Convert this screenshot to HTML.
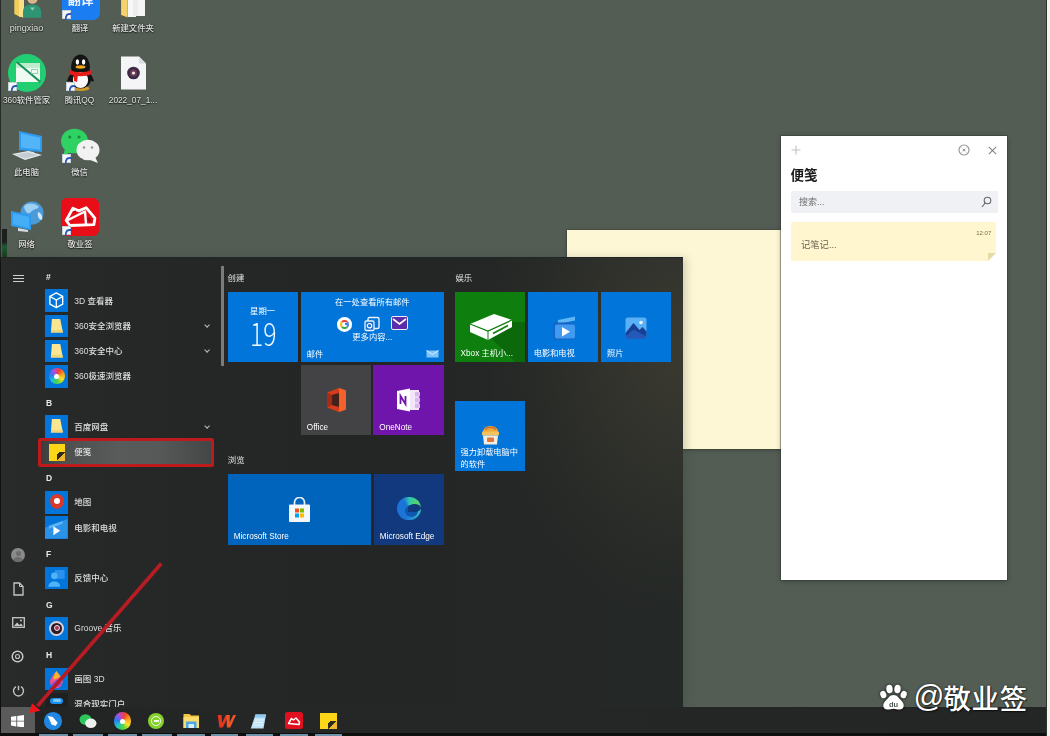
<!DOCTYPE html>
<html lang="zh-CN">
<head>
<meta charset="utf-8">
<title>便笺</title>
<style>
*{margin:0;padding:0;box-sizing:border-box}
html,body{width:1050px;height:736px;overflow:hidden}
body{position:relative;background:#535d54;font-family:"Liberation Sans","Noto Sans CJK SC",sans-serif;color:#fff}
.abs{position:absolute}
.dl{position:absolute;width:60px;text-align:center;font-size:8.3px;line-height:10px;color:#e2e4e2;font-weight:500;text-shadow:0 0 2px rgba(0,0,0,.8),0 1px 1px rgba(0,0,0,.6);white-space:nowrap;filter:blur(.35px)}
.sc{position:absolute;width:9px;height:9px;background:#f4f6f8;border:.5px solid #c8d0d8}
.sc:after{content:"";position:absolute;left:2px;top:1.5px;width:3.5px;height:5px;border-left:2px solid #2a56b8;border-top:2px solid #2a56b8;border-radius:4px 0 0 0;transform:skewX(-12deg)}
#start{position:absolute;left:1px;top:258px;width:681.500px;height:449px;background:linear-gradient(90deg,#292b2a 0,#272928 10%,#252726 30%,#242625 55%,#242826 100%);box-shadow:3px 0 8px rgba(30,60,40,.22);overflow:hidden}
.li{position:absolute;left:44.3px;width:22.6px;height:22.6px;background:#0175da;overflow:hidden}
.lt{position:absolute;left:73.300px;font-size:8.500px;line-height:12px;color:#dedede;font-weight:500;white-space:nowrap;filter:blur(.4px)}
.lh{position:absolute;left:45px;font-size:8.5px;line-height:12px;color:#e8e8e8;font-weight:bold;filter:blur(.3px)}
.chev{position:absolute;left:203.5px;width:4.2px;height:4.2px;border-right:1.2px solid #bdbdbd;border-bottom:1.2px solid #bdbdbd;transform:rotate(45deg)}
.tile{position:absolute;background:#0175da;overflow:hidden}
.tt{position:absolute;left:6px;bottom:2.300px;font-size:8.2px;line-height:11px;color:#fff;white-space:nowrap;filter:blur(.3px)}
.gh{position:absolute;font-size:8.4px;line-height:11px;color:#e4e4e4;filter:blur(.3px)}
</style>
</head>
<body>
<!--DESKTOP-->
<div class="abs" style="left:0;top:0;width:1.300px;height:736px;background:linear-gradient(180deg,#262b27 0,#262b27 34%,#0e0f0f 36%,#0e0f0f 100%);z-index:5"></div>
<div class="abs" style="left:1046px;top:0;width:1.2px;height:736px;background:#2f3431"></div>
<div class="abs" style="left:1047.2px;top:0;width:3px;height:736px;background:#f3f4ee"></div>
<div class="abs" style="left:1.500px;top:229px;width:5px;height:28.500px;background:linear-gradient(180deg,#1a211c 0,#1a211c 45%,#1f5a34 60%,#163a22 100%);filter:blur(.5px)"></div>

<!-- row 1 -->
<svg class="abs" style="left:12px;top:-10px" width="34" height="30" viewBox="0 0 34 30">
  <path d="M2.300 0h9.500v27.500l-4.500-1-5-2.500z" fill="#f2cc58"/><path d="M7 2h5v25.500l-5-1z" fill="#f9e08a"/>
  <circle cx="20.500" cy="8.500" r="5.200" fill="#d9b48c"/>
  <path d="M11 27.800v-6c0-5.500 4-7.300 9.500-7.300s8.700 3 8.700 8.300v5z" fill="#2f9474"/>
  <path d="M18 17.500l2.500 3 2.500-3z" fill="#8fd0b4"/>
</svg>
<div class="dl" style="left:-3.5px;top:23px;font-size:9px">pingxiao</div>
<div class="abs" style="left:61.7px;top:-18px;width:38.5px;height:38px;border-radius:7px;background:#1b7df2;overflow:hidden">
  <div class="abs" style="left:6px;top:11px;font-size:13px;line-height:13px;font-weight:bold;color:#eaf3ff;filter:blur(.5px)">翻译</div>
</div>
<div class="sc" style="left:62px;top:10px"></div>
<div class="dl" style="left:50px;top:23px">翻译</div>
<svg class="abs" style="left:119px;top:-10px" width="30" height="30" viewBox="0 0 30 30">
  <path d="M2 2h7l2 2v22l-9-1z" fill="#e4b84a"/><path d="M9 3h8v24H9z" fill="#f7f7f7"/><path d="M14 3h7v23h-7z" fill="#ececee"/><path d="M19 4h7v22h-7z" fill="#f5f5f6"/><path d="M2.500 6l6 3v18.500l-6-2.500z" fill="#f4d36a"/>
  <path d="M8.500 9v18" stroke="#c9a544" stroke-width=".6"/>
</svg>
<div class="dl" style="left:103px;top:23px">新建文件夹</div>

<!-- row 2 -->
<div class="abs" style="left:7.7px;top:54px;width:38.6px;height:38px;border-radius:50%;background:#21cf72;overflow:hidden">
  <div class="abs" style="left:8px;top:9px;width:24px;height:19px;background:#eefaf2"></div>
  <div class="abs" style="left:8px;top:9px;width:24px;height:5px;background:#bfeccf"></div>
  <div class="abs" style="left:5px;top:17px;width:31px;height:2px;background:#1a8f5a;transform:rotate(40deg)"></div>
  <div class="abs" style="left:23px;top:15px;width:7px;height:5px;border:1px solid #8fd9ae"></div>
</div>
<div class="sc" style="left:8px;top:82px"></div>
<div class="dl" style="left:-3.5px;top:95px">360软件管家</div>
<svg class="abs" style="left:64px;top:53px" width="33" height="39" viewBox="0 0 33 39">
  <ellipse cx="16.5" cy="35.5" rx="9" ry="2.6" fill="#d59a2a"/>
  <path d="M3 28c2-6 4-8 6-9l15 0c2 1 4 3 6 9-2 1-4 0-5-2H8c-1 2-3 3-5 2z" fill="#141414"/>
  <ellipse cx="16.5" cy="14" rx="9.5" ry="12.5" fill="#141414"/>
  <ellipse cx="16.5" cy="26" rx="10.5" ry="9.5" fill="#141414"/>
  <ellipse cx="16.5" cy="27" rx="7.6" ry="8" fill="#fafafa"/>
  <ellipse cx="13.4" cy="9" rx="1.7" ry="2.7" fill="#fff"/><ellipse cx="19.6" cy="9" rx="1.7" ry="2.7" fill="#fff"/>
  <ellipse cx="16.5" cy="14" rx="5" ry="1.7" fill="#f3a81c"/>
  <path d="M6 17c6 3 15 3 21 0l1 4c-7 3-16 3-23 0z" fill="#e31b1b"/><path d="M10 21l4 1-1 7-3-1z" fill="#e31b1b"/>
</svg>
<div class="sc" style="left:66px;top:82px"></div>
<div class="dl" style="left:49.5px;top:95px">腾讯QQ</div>
<svg class="abs" style="left:120px;top:56px" width="27" height="34" viewBox="0 0 27 34">
  <path d="M1 .5h18l7 7V33.500H1z" fill="#f5f5f7"/><path d="M19 .5v7h7z" fill="#d9dbe0"/>
  <circle cx="13.500" cy="17" r="6.300" fill="#3a2a45"/><circle cx="13.500" cy="17" r="3.600" fill="#6e3a52"/><circle cx="13.500" cy="17" r="1.600" fill="#f2e9ee"/>
</svg>
<div class="dl" style="left:103px;top:95px">2022_07_1...</div>

<!-- row 3 -->
<svg class="abs" style="left:10px;top:129px" width="36" height="33" viewBox="0 0 36 33">
  <path d="M9 2l23 5v16L9 21z" fill="#2d9bf0"/><path d="M11 4.500l19 4.200v12L11 18.500z" fill="#53b4f7"/>
  <path d="M17 22l7 1v3l-7-1z" fill="#cfd6dc"/><path d="M2 25l16-3 14 4-17 5z" fill="#e5e9ec"/><path d="M5 25.500l13-2.300 10 2.800-13 3.500z" fill="#c5ccd2"/>
</svg>
<div class="dl" style="left:-3.500px;top:167px">此电脑</div>
<svg class="abs" style="left:60px;top:127px" width="41" height="38" viewBox="0 0 41 38">
  <ellipse cx="14.500" cy="14" rx="13.500" ry="12.300" fill="#2fd163"/><path d="M5 22l-2 7 8-4z" fill="#2fd163"/>
  <circle cx="9.800" cy="10" r="1.600" fill="#1d8a44"/><circle cx="19" cy="10" r="1.600" fill="#1d8a44"/>
  <ellipse cx="28" cy="23" rx="11.500" ry="10.300" fill="#f2f2f2"/><path d="M35 30l3 6-8-3z" fill="#f2f2f2"/>
  <circle cx="24" cy="20.500" r="1.300" fill="#9a9a9a"/><circle cx="32" cy="20.500" r="1.300" fill="#9a9a9a"/>
</svg>
<div class="sc" style="left:61.500px;top:154px"></div>
<div class="dl" style="left:49.500px;top:167px">微信</div>

<!-- row 4 -->
<svg class="abs" style="left:10px;top:200px" width="36" height="35" viewBox="0 0 36 35">
  <circle cx="22" cy="13" r="11.500" fill="#4a9bd8"/><path d="M14 6c4-4 12-3 15 1-3 3-6 2-8 5s-6 1-7-6z" fill="#9fd0f2"/><path d="M28 12c3 1 5 4 4 8-3 0-5-4-4-8z" fill="#cfe9fa"/>
  <path d="M1 11l20 4v15L1 26z" fill="#2d9bf0"/><path d="M3 13.500l16 3.200v11L3 24.200z" fill="#45aef7"/>
  <path d="M8 28l10 2v2l-10-1z" fill="#d5dbe0"/>
</svg>
<div class="dl" style="left:-3.500px;top:239.200px">网络</div>
<div class="abs" style="left:61px;top:197.800px;width:38.300px;height:38.200px;border-radius:6px;background:#e80d16;overflow:hidden">
  <svg class="abs" style="left:0;top:0;filter:blur(.3px)" width="40" height="39" viewBox="0 0 40 39">
    <path d="M5.200 22.500L11.800 10.300l6 2.600 7.300-3.200 8.800 10.500-1 6.500-24 .8z" fill="none" stroke="#fff" stroke-width="2.800" stroke-linejoin="round"/>
    <path d="M6 22.500L24 13.500l1 13" fill="none" stroke="#fff" stroke-width="2.400" stroke-linejoin="round"/>
    <ellipse cx="28.300" cy="21.800" rx="1.500" ry="2.500" fill="#9c0f16" transform="rotate(-25 28.300 21.800)"/>
    <circle cx="14.200" cy="13.400" r="1" fill="#9c0f16"/>
  </svg>
</div>
<div class="sc" style="left:61.500px;top:226px"></div>
<div class="dl" style="left:50px;top:239.200px">敬业签</div>
<!--NOTES-->
<div class="abs" style="left:566.700px;top:229.500px;width:215px;height:219.200px;background:#fef7d6;box-shadow:0 0 0 .6px rgba(60,60,40,.55),0 1px 4px rgba(0,0,0,.25)"></div>
<div class="abs" style="left:781px;top:136px;width:226px;height:443.500px;background:#fff;box-shadow:0 0 0 .7px rgba(50,55,50,.6),0 1px 5px rgba(0,0,0,.3)">
  <svg class="abs" style="left:9.500px;top:9px" width="10" height="10" viewBox="0 0 10 10"><path d="M5 .5v9M.5 5h9" stroke="#c2c2c2" stroke-width="1.100"/></svg>
  <svg class="abs" style="left:176.900px;top:8px;filter:blur(.25px)" width="12" height="12" viewBox="0 0 12 12"><circle cx="6" cy="6" r="5" fill="none" stroke="#959595" stroke-width="1.150"/><circle cx="6" cy="6" r="1.300" fill="#9a9a9a"/><path d="M3.400 3.400l1 1M8.600 3.400l-1 1M3.400 8.600l1-1M8.600 8.600l-1-1" stroke="#b5b5b5" stroke-width=".8"/></svg>
  <svg class="abs" style="left:207px;top:10px;filter:blur(.25px)" width="9" height="9" viewBox="0 0 9 9"><path d="M.8 .8l7.400 7.400M8.200 .8l-7.400 7.400" stroke="#848484" stroke-width="1.100"/></svg>
  <div class="abs" style="left:9.500px;top:29.600px;font-size:13.500px;line-height:20px;font-weight:bold;color:#1a1a1a;filter:blur(.35px)">便笺</div>
  <div class="abs" style="left:10px;top:55.200px;width:206.500px;height:21.500px;background:#f0f1f4;border-radius:1px">
    <div class="abs" style="left:8px;top:4.500px;font-size:9px;line-height:12px;color:#6f6f6f;filter:blur(.3px)">搜索...</div>
    <svg class="abs" style="left:190px;top:5px" width="11" height="12" viewBox="0 0 11 12"><circle cx="6.500" cy="4.500" r="3.300" fill="none" stroke="#666" stroke-width="1.100"/><path d="M4.200 7l-3.200 4" stroke="#666" stroke-width="1.200"/></svg>
  </div>
  <div class="abs" style="left:10px;top:86px;width:205.300px;height:38.700px;background:#fff6d0;border-radius:1.500px;overflow:hidden">
    <div class="abs" style="right:5px;top:8px;font-size:6px;line-height:7px;color:#7d6f3a;filter:blur(.3px)">12:07</div>
    <div class="abs" style="left:10px;top:17px;font-size:9.300px;line-height:12px;color:#6a6354;filter:blur(.3px)">记笔记...</div>
    <div class="abs" style="right:0;bottom:0;width:0;height:0;border-style:solid;border-width:0 0 8.500px 8.500px;border-color:transparent transparent #fff transparent"></div>
    <div class="abs" style="right:0;bottom:0;width:0;height:0;border-style:solid;border-width:8.500px 8.500px 0 0;border-color:#e6dba8 transparent transparent transparent"></div>
  </div>
</div>
<!--START-->
<div class="abs" style="left:1px;top:257.300px;width:681.500px;height:1px;background:#222423"></div>
<div id="start">
  <div class="abs" style="left:470px;top:0;width:212px;height:449px;background:radial-gradient(ellipse 200px 270px at 100% 20%,rgba(255,215,140,.10) 0,rgba(255,215,140,.06) 40%,rgba(255,215,140,.02) 75%,rgba(255,215,140,0) 100%)"></div>
  <!-- rail -->
  <div class="abs" style="left:11.500px;top:16.500px;width:11.200px;height:1.300px;background:#cfcfcf;box-shadow:0 3px 0 #cfcfcf,0 6px 0 #cfcfcf"></div>
  <div class="abs" style="left:10.300px;top:290px;width:14px;height:14px;border-radius:50%;background:#8a8a8a;overflow:hidden"><div class="abs" style="left:4.500px;top:2.500px;width:5px;height:5px;border-radius:50%;background:#6c6c6c"></div><div class="abs" style="left:2px;top:8.500px;width:10px;height:8px;border-radius:50%;background:#6c6c6c"></div></div>
  <svg class="abs" style="left:11.500px;top:324px" width="11" height="14" viewBox="0 0 11 14"><path d="M1 1h5.500l3.500 3.500V13H1z" fill="none" stroke="#c6c6c6" stroke-width="1.300"/><path d="M6.500 1v3.500H10" fill="none" stroke="#c6c6c6" stroke-width="1"/></svg>
  <svg class="abs" style="left:10.500px;top:359px" width="13" height="11" viewBox="0 0 13 11"><rect x=".7" y=".7" width="11.600" height="9.600" fill="none" stroke="#c6c6c6" stroke-width="1.300"/><path d="M2 9l3-3.500 2.500 2.500 1.500-1.500L11 9z" fill="#c6c6c6"/><circle cx="9" cy="3.500" r="1" fill="#c6c6c6"/></svg>
  <svg class="abs" style="left:10.400px;top:391.500px" width="13" height="13" viewBox="0 0 13 13"><circle cx="6.500" cy="6.500" r="5.300" fill="none" stroke="#c6c6c6" stroke-width="1.500"/><circle cx="6.500" cy="6.500" r="2" fill="none" stroke="#c6c6c6" stroke-width="1.100"/></svg>
  <svg class="abs" style="left:10.500px;top:425.500px" width="13" height="13" viewBox="0 0 13 13"><path d="M4 2.600a5 5 0 1 0 5 0" fill="none" stroke="#c6c6c6" stroke-width="1.400"/><path d="M6.500 1.800v4.500" stroke="#c6c6c6" stroke-width="1.400"/></svg>

  <!-- list -->
  <div class="lh" style="top:12.77px">#</div>

  <div class="li" style="top:31.40px"><svg width="22.600" height="22.600" viewBox="0 0 23 23"><path d="M11.500 4l6.500 3.500v8L11.500 19 5 15.500v-8z" fill="none" stroke="#fff" stroke-width="1.400" stroke-linejoin="round"/><path d="M5 7.500l6.500 3.700 6.500-3.700M11.500 11.200V19" fill="none" stroke="#fff" stroke-width="1.300"/></svg></div>
  <div class="lt" style="top:36.68px">3D 查看器</div>

  <div class="li" style="top:56.61px"><svg width="22.600" height="22.600" viewBox="0 0 23 23"><path d="M7 4h8.500l2.700 13.800H6z" fill="#fbe590"/><path d="M6.200 15.300h11.500l.5 2.500H6z" fill="#f2d676"/></svg></div>
  <div class="lt" style="top:61.89px">360安全浏览器</div>
  <div class="chev" style="top:64.88px"></div>

  <div class="li" style="top:81.82px"><svg width="22.600" height="22.600" viewBox="0 0 23 23"><path d="M7 4h8.500l2.700 13.800H6z" fill="#fbe590"/><path d="M6.200 15.300h11.500l.5 2.500H6z" fill="#f2d676"/></svg></div>
  <div class="lt" style="top:87.10px">360安全中心</div>
  <div class="chev" style="top:90.09px"></div>

  <div class="li" style="top:107.03px"><div class="abs" style="left:3.300px;top:3.300px;width:16px;height:16px;border-radius:50%;background:conic-gradient(from 20deg,#f5402c,#f9a01e,#f7e02e,#4fd43d,#22c4c8,#2b7af5,#b04ce0,#f5402c)"></div><div class="abs" style="left:9px;top:9px;width:4.600px;height:4.600px;border-radius:50%;background:#fff"></div></div>
  <div class="lt" style="top:112.31px">360极速浏览器</div>

  <div class="lh" style="top:138.82px">B</div>

  <div class="li" style="top:157.45px"><svg width="22.600" height="22.600" viewBox="0 0 23 23"><path d="M7 4h8.500l2.700 13.800H6z" fill="#fbe590"/><path d="M6.200 15.300h11.500l.5 2.500H6z" fill="#f2d676"/></svg></div>
  <div class="lt" style="top:162.73px">百度网盘</div>
  <div class="chev" style="top:165.72px"></div>

  <div class="abs" style="left:37px;top:179.97px;width:175.600px;height:29px;border:3.300px solid #bd1a1e;border-radius:2.500px;background:linear-gradient(90deg,#3c3e3d 0,#4d4f4e 12%,#595b5a 45%,#575958 70%,#444645 100%);filter:blur(.5px)"></div>
  <div class="abs" style="left:47.600px;top:186.05px;width:16.300px;height:16.700px;background:#fdd617;overflow:hidden;filter:blur(.3px)"><div class="abs" style="right:0;bottom:0;width:8.400px;height:8.800px;background:linear-gradient(135deg,#fdd617 0,#fdd617 12%,#2b2a1c 13%,#2b2a1c 47%,#f1b52d 48%,#f1b52d 100%)"></div></div>
  <div class="lt" style="top:187.94px">便笺</div>

  <div class="lh" style="top:214.45px">D</div>

  <div class="li" style="top:233.08px"><div class="abs" style="left:4.300px;top:3.300px;width:14px;height:15px;border-radius:50% 50% 50% 50%/45% 45% 55% 55%;background:#d8392b"></div><div class="abs" style="left:8.300px;top:7px;width:6px;height:6px;border-radius:50%;background:#fff"></div></div>
  <div class="lt" style="top:238.36px">地图</div>

  <div class="li" style="top:258.29px"><svg width="22.600" height="22.600" viewBox="0 0 23 23"><path d="M0 12L23 3v20H0z" fill="#2b92ea"/><path d="M4 10l14-5v3L4 13z" fill="#5cb4f6"/><path d="M8.500 10.500l7 4.500-7 4.500z" fill="#fff"/></svg></div>
  <div class="lt" style="top:263.57px">电影和电视</div>

  <div class="lh" style="top:290.08px">F</div>

  <div class="li" style="top:308.71px"><svg width="22.600" height="22.600" viewBox="0 0 23 23"><rect x="10" y="3" width="10" height="9" fill="#2a92ec"/><circle cx="9.500" cy="9" r="3.400" fill="#4fb3f8"/><path d="M3.500 20c0-7 12-7 12 0z" fill="#4fb3f8"/></svg></div>
  <div class="lt" style="top:313.99px">反馈中心</div>

  <div class="lh" style="top:340.50px">G</div>

  <div class="li" style="top:359.13px"><div class="abs" style="left:3.800px;top:3.800px;width:15px;height:15px;border-radius:50%;background:#2a1a2a;border:2px solid #d8d0d4"></div><div class="abs" style="left:8.300px;top:8.300px;width:6px;height:6px;border-radius:50%;background:#a33a50;border:1.500px solid #f0e0e6"></div></div>
  <div class="lt" style="top:364.41px">Groove 音乐</div>

  <div class="lh" style="top:390.92px">H</div>

  <div class="li" style="top:409.55px"><svg width="22.600" height="22.600" viewBox="0 0 23 23"><path d="M11.500 3c4 5 6.500 8 6.500 11a6.500 6.500 0 0 1-13 0c0-3 2.500-6 6.500-11z" fill="#f0508c"/><path d="M11.500 3c2 2.500 3.500 4.500 4.500 6l-7 3c-1-2 0-5 2.500-9z" fill="#f7b52c"/><path d="M6 17c3 3 8 3 11-1l-5-4z" fill="#7a4de0"/></svg></div>
  <div class="lt" style="top:414.83px">画图 3D</div>

  <div class="li" style="top:434.76px;background:#1f2021"><div class="abs" style="left:4.700px;top:4.800px;width:13.300px;height:6.700px;border-radius:3px;background:#1b8ff0"></div><div class="abs" style="left:7.500px;top:6.500px;width:8px;height:3px;border-radius:2px;background:#7cc6fb"></div></div>
  <div class="lt" style="top:439.84px">混合现实门户</div>

  <div class="abs" style="left:220.400px;top:7.500px;width:2.600px;height:100.500px;background:#7b7b7b"></div>

  <!-- tiles -->
  <div class="gh" style="left:226.600px;top:14.500px">创建</div>
  <div class="gh" style="left:454.500px;top:14.500px">娱乐</div>
  <div class="gh" style="left:226.800px;top:197px">浏览</div>
<!--TILES-->
  <div class="tile" style="left:226.500px;top:33.500px;width:70.300px;height:70.500px">
    <div class="abs" style="left:0;width:70.300px;top:14.800px;text-align:center;font-size:8.400px;line-height:11px;filter:blur(.3px)">星期一</div>
    <div class="abs" style="left:0;width:70.300px;top:19.800px;text-align:center;font-family:'Noto Sans CJK SC','Liberation Sans',sans-serif;font-weight:300;font-size:31px;line-height:44px;color:#eef6ff;transform:scaleX(.8);filter:blur(.3px)">19</div>
  </div>
  <div class="tile" style="left:299.700px;top:33.500px;width:143.300px;height:70.500px">
    <div class="abs" style="left:0;width:143.300px;top:5.500px;text-align:center;font-size:8.300px;line-height:11px;filter:blur(.3px)">在一处查看所有邮件</div>
    <div class="abs" style="left:36.600px;top:25.500px;width:14.600px;height:14.600px;border-radius:50%;background:#fff"><div class="abs" style="left:3px;top:3px;width:8.600px;height:8.600px;border-radius:50%;border:2.200px solid;border-color:#ea4335 #4285f4 #34a853 #fbbc05"></div><div class="abs" style="left:7.300px;top:6.400px;width:3.800px;height:1.800px;background:#4285f4"></div></div>
    <svg class="abs" style="left:63.300px;top:24.500px" width="16" height="16" viewBox="0 0 16 16"><rect x="4" y="1.500" width="11" height="11" rx="1.500" fill="none" stroke="#e8f2ff" stroke-width="1.400"/><rect x="1" y="5" width="9" height="9.500" rx="1.300" fill="#1b6fd0" stroke="#e8f2ff" stroke-width="1.300"/><circle cx="5.500" cy="9.700" r="2.200" fill="none" stroke="#fff" stroke-width="1.200"/></svg>
    <svg class="abs" style="left:90.300px;top:24.500px" width="17" height="14" viewBox="0 0 17 14"><rect x=".5" y=".5" width="16" height="13" rx="1.500" fill="#5b2da8" stroke="#efe8ff" stroke-width="1"/><path d="M2 3l6.500 5L15 3" fill="none" stroke="#fff" stroke-width="1.600"/></svg>
    <div class="abs" style="left:0;width:143.300px;top:40.500px;text-align:center;font-size:8.300px;line-height:11px;filter:blur(.3px)">更多内容...</div>
    <div class="tt">邮件</div>
    <svg class="abs" style="left:125.500px;top:58.500px" width="13" height="8" viewBox="0 0 13 8"><rect x=".5" y=".5" width="12" height="7" fill="#7fc4fb"/><path d="M.5.500l6 4 6-4" fill="none" stroke="#dff0ff" stroke-width="1"/></svg>
  </div>
  <div class="tile" style="left:299.800px;top:107.200px;width:70.300px;height:70px;background:#434345">
    <svg class="abs" style="left:24px;top:21.500px" width="23" height="26" viewBox="0 0 23 26"><path d="M14 1l7 2.500v19L14 25 2 20.500v-15z" fill="#d83b1a"/><path d="M14 1v24l7-2.500v-19z" fill="#f4622c"/><path d="M6.500 8l7.500-2v14l-7.500-2z" fill="#43221c"/><path d="M2 5.500l4.500 2.500v10L2 20.500z" fill="#a62a14"/></svg>
    <div class="tt">Office</div>
  </div>
  <div class="tile" style="left:372.300px;top:107.200px;width:70.700px;height:70px;background:#7015ab">
    <svg class="abs" style="left:23px;top:23px" width="25" height="24" viewBox="0 0 25 24"><path d="M13 2h10v20H13z" fill="#f3e6fb"/><path d="M19 4h5v4.500h-5zM19 9.700h5v4.500h-5zM19 15.400h5V20h-5z" fill="#d9b8ee"/><path d="M1 3l13-2.500v23L1 21z" fill="#fff"/><path d="M4.500 16V8l5 8V8" fill="none" stroke="#7015ab" stroke-width="1.800"/></svg>
    <div class="tt">OneNote</div>
  </div>
  <div class="tile" style="left:226.700px;top:216.300px;width:143.200px;height:70.400px;background:#0063bc">
    <svg class="abs" style="left:60px;top:22.500px" width="23" height="26" viewBox="0 0 23 26"><path d="M6.500 8V5.500a5 5 0 0 1 10 0V8" fill="none" stroke="#e8f0f8" stroke-width="1.700"/><rect x="1" y="7.500" width="21" height="17.500" rx="1" fill="#f4f6f8"/><rect x="7" y="11.500" width="4" height="4" fill="#f25022"/><rect x="12" y="11.500" width="4" height="4" fill="#7fba00"/><rect x="7" y="16.500" width="4" height="4" fill="#00a4ef"/><rect x="12" y="16.500" width="4" height="4" fill="#ffb900"/></svg>
    <div class="tt">Microsoft Store</div>
  </div>
  <div class="tile" style="left:372.800px;top:216.300px;width:70.200px;height:70.400px;background:#12387d">
    <div class="abs" style="left:23.500px;top:22.500px;width:23.500px;height:23.500px;border-radius:50%;background:conic-gradient(from 200deg,#1b74d8 0 35%,#2ec6b0 45%,#55d66a 60%,#35b7c8 75%,#1b74d8 100%)"></div>
    <div class="abs" style="left:31px;top:31px;width:13px;height:12px;border-radius:50%;background:#0d57b0"></div>
    <div class="abs" style="left:34px;top:30px;width:13px;height:8px;border-radius:50% 50% 50% 0;background:#12387d"></div>
    <div class="tt">Microsoft Edge</div>
  </div>
  <div class="tile" style="left:453.600px;top:33.500px;width:70.600px;height:70.200px;background:#0e7e0e">
    <div class="abs" style="left:20px;top:30px;width:80px;height:70px;background:rgba(0,0,0,.16);transform:skewX(45deg);transform-origin:0 0"></div>
    <svg class="abs" style="left:14px;top:21px" width="44" height="28" viewBox="0 0 44 28"><path d="M1 11l24-10 18 6v7L19 27 1 19z" fill="#fff"/><path d="M1 11l18 7 24-11" fill="none" stroke="#0e7e0e" stroke-width="1.300"/><path d="M19 18v9" stroke="#0e7e0e" stroke-width="1"/><path d="M24 20.500l15-8" stroke="#0e7e0e" stroke-width="1.600"/></svg>
    <div class="tt">Xbox 主机小...</div>
  </div>
  <div class="tile" style="left:526.800px;top:33.500px;width:70.200px;height:70.200px">
    <svg class="abs" style="left:24.500px;top:24px" width="25" height="24" viewBox="0 0 25 24"><path d="M6 4l17-3.500v4L6 8z" fill="#5fb6f6"/><rect x="1" y="6.500" width="21" height="17" rx="2" fill="#1b63c4"/><rect x="3" y="8.500" width="20" height="14" rx="2" fill="#3f9af0"/><path d="M10 11l8 4.700-8 4.700z" fill="#fff"/></svg>
    <div class="tt">电影和电视</div>
  </div>
  <div class="tile" style="left:600px;top:33.500px;width:70.200px;height:70.200px">
    <svg class="abs" style="left:24px;top:25.500px" width="22" height="22" viewBox="0 0 22 22"><rect x=".5" y=".5" width="21" height="21" rx="2" fill="#5ab0f5"/><path d="M.5 16l8-10 6 7 3-3 4 4.500v5a2 2 0 0 1-2 2h-17a2 2 0 0 1-2-2z" fill="#173f95"/><path d="M.5 19.500l8-7 13 7v0a2 2 0 0 1-2 2h-17a2 2 0 0 1-2-2z" fill="#2559b8"/><circle cx="16" cy="5.500" r="1.800" fill="#eaf5ff"/></svg>
    <div class="tt">照片</div>
  </div>
  <div class="tile" style="left:453.600px;top:143.400px;width:70.600px;height:70.100px">
    <svg class="abs" style="left:26px;top:24px" width="19" height="20" viewBox="0 0 19 20"><path d="M2 7c0-8 15-8 15 0z" fill="#f0a73a"/><path d="M4 4.500c3-3 8-3 11 0" fill="none" stroke="#c8702a" stroke-width="1.300"/><rect x="1" y="6.500" width="17" height="4" rx="1" fill="#f6c25b"/><path d="M2 10.500h15l-1 9H3z" fill="#f3ece0"/><rect x="6" y="12.500" width="7" height="4.500" rx="1" fill="#e0743a"/></svg>
    <div class="abs" style="left:6px;top:46px;font-size:8.200px;line-height:12px;white-space:nowrap;filter:blur(.3px)">强力卸载电脑中<br>的软件</div>
  </div>

</div>

<!--TASKBAR-->
<div class="abs" style="left:0;top:707px;width:1046px;height:26.300px;background:linear-gradient(90deg,#222423 0,#252726 25%,#242625 100%)"></div>
<div class="abs" style="left:0;top:733px;width:1046px;height:3px;background:#0d0e0e"></div>
<div class="abs" style="left:1px;top:707px;width:33.800px;height:26.300px;background:#5b5b5b"></div>
<svg class="abs" style="left:11px;top:714.800px" width="13" height="12.400" viewBox="0 0 13 12.400"><path d="M0 1.800l5.300-.8v4.800H0zM6.200.9L13 0v5.800H6.200zM0 6.600h5.300v4.800L0 10.600zM6.200 6.600H13v5.800l-6.800-.9z" fill="#fff"/></svg>
<!-- indicators -->
<div class="abs" style="left:39px;top:733.500px;width:28.600px;height:3px;background:#6f93ab"></div>
<div class="abs" style="left:73.400px;top:733.500px;width:29.500px;height:3px;background:#6f93ab"></div>
<div class="abs" style="left:107.800px;top:733.500px;width:29.500px;height:3px;background:#6f93ab"></div>
<div class="abs" style="left:142.200px;top:733.500px;width:29.500px;height:3px;background:#6f93ab"></div>
<div class="abs" style="left:176.600px;top:733.500px;width:28px;height:3px;background:#6f93ab"></div>
<div class="abs" style="left:211.400px;top:733.500px;width:27px;height:3px;background:#6f93ab"></div>
<div class="abs" style="left:245.600px;top:733.500px;width:27.500px;height:3px;background:#6f93ab"></div>
<div class="abs" style="left:279.600px;top:733.500px;width:28.400px;height:3px;background:#6f93ab"></div>
<div class="abs" style="left:314.600px;top:733.500px;width:27.500px;height:3px;background:#6f93ab"></div>
<!-- icons -->
<div class="abs" style="left:44.200px;top:712.300px;width:17.600px;height:17.600px;border-radius:50%;background:#1f86e2;overflow:hidden"><svg width="17.600" height="17.600" viewBox="0 0 18 18"><path d="M4 4l5 1 5 6-2 3-4-1-2-4z" fill="#fff"/><path d="M4 4l3 5 5 5" stroke="#cfe6fb" stroke-width=".8" fill="none"/></svg></div>
<svg class="abs" style="left:78.500px;top:713.500px" width="18" height="15" viewBox="0 0 18 15"><ellipse cx="6.500" cy="5.500" rx="6" ry="5.200" fill="#2dc65a"/><ellipse cx="11.800" cy="9.300" rx="5.700" ry="4.800" fill="#ecefec"/></svg>
<div class="abs" style="left:113.700px;top:712.300px;width:17.600px;height:17.600px;border-radius:50%;background:conic-gradient(from 20deg,#f5402c,#f9a01e,#f7e02e,#4fd43d,#22c4c8,#2b7af5,#b04ce0,#f5402c)"><div class="abs" style="left:6.300px;top:6.300px;width:5px;height:5px;border-radius:50%;background:#fff"></div></div>
<div class="abs" style="left:148px;top:713px;width:16.400px;height:16.400px;border-radius:50%;background:#86d12e"><div class="abs" style="left:3.400px;top:3.400px;width:9.600px;height:9.600px;border-radius:50%;border:1.800px solid #f4fbe8"></div><div class="abs" style="left:5.500px;top:7.400px;width:5.500px;height:1.600px;background:#f4fbe8"></div></div>
<svg class="abs" style="left:182.500px;top:712.800px" width="16.500" height="15.500" viewBox="0 0 16.500 15.500"><path d="M.5 1h6l1.500 1.500h8V15H.5z" fill="#f3c63e"/><path d="M.5 4h15.500V15H.5z" fill="#fbdc6c"/><path d="M3 8.500h10.500V15H3z" fill="#4aa6e8"/><path d="M5.500 11h5.500v4H5.500z" fill="#d9eefb"/></svg>
<svg class="abs" style="left:215.500px;top:713.500px;transform:skewX(-12deg)" width="19" height="14" viewBox="0 0 19 14"><path d="M.5 1h3.800l2.200 8 2-8h3l-3.300 12.500H4.800z" fill="#e8351e"/><path d="M9 1h3.500l1.500 7.500L16 1h2.800l-3.200 12.500h-3.300z" fill="#f0552a"/></svg>
<svg class="abs" style="left:250px;top:713.500px" width="17" height="16" viewBox="0 0 17 16"><path d="M5.500.5h10.500l-2.500 14H.800z" fill="#bfe3f6"/><path d="M5.500.5h10.500l-.6 3H4.700z" fill="#8cc9ec"/><path d="M4.500 6h9M4 8.500h9M3.500 11h9" stroke="#e9f6fd" stroke-width="1"/></svg>
<div class="abs" style="left:285px;top:712.400px;width:18px;height:16.400px;border-radius:2.500px;background:#e0111f"><svg width="18" height="16.400" viewBox="0 0 18 16.400"><path d="M3.500 11.500l3-5 2 1.500 2.500-2 3.500 4-.5 2.500z" fill="none" stroke="#fff" stroke-width="1.500" stroke-linejoin="round"/></svg></div>
<div class="abs" style="left:320px;top:712.800px;width:16.600px;height:16.600px;background:#fdd617;overflow:hidden"><div class="abs" style="right:0;bottom:0;width:8.400px;height:8.800px;background:linear-gradient(135deg,#fdd617 0,#fdd617 12%,#2b2a1c 13%,#2b2a1c 47%,#f1b52d 48%,#f1b52d 100%)"></div></div>

<!--OVERLAY-->
<svg class="abs" style="left:0;top:540px;filter:blur(.4px)" width="200" height="196" viewBox="0 540 200 196">
  <path d="M161.300 563.500L37.500 706" stroke="#b81c22" stroke-width="3.600" stroke-linecap="butt" fill="none"/>
  <path d="M29.300 713L32 703.300 40.500 710.800z" fill="#f01418"/>
</svg>
<svg class="abs" style="left:879px;top:684px;filter:drop-shadow(0 0 1.500px rgba(0,0,0,.75))" width="29" height="27" viewBox="0 0 29 27">
  <ellipse cx="4.300" cy="10.500" rx="3" ry="3.800" fill="#fff" transform="rotate(-18 4.300 10.500)"/>
  <ellipse cx="10.500" cy="5" rx="3.200" ry="4.200" fill="#fff" transform="rotate(-6 10.500 5)"/>
  <ellipse cx="18.500" cy="5" rx="3.200" ry="4.200" fill="#fff" transform="rotate(6 18.500 5)"/>
  <ellipse cx="24.700" cy="10.500" rx="3" ry="3.800" fill="#fff" transform="rotate(18 24.700 10.500)"/>
  <path d="M14.500 11c4 0 5.500 3.500 8.500 6.500 3 3 2 8-2.500 8-2.500 0-3.500-.8-6-.8s-3.500.8-6 .8C4 25.500 3 20.500 6 17.500c3-3 4.500-6.500 8.500-6.500z" fill="#fff"/>
  <text x="14.500" y="22.500" font-family="Liberation Sans,sans-serif" font-size="7.500" font-weight="bold" text-anchor="middle" fill="#4a5650">du</text>
</svg>
<div class="abs" style="left:913.500px;top:680.600px;font-size:27.400px;line-height:34px;font-weight:500;letter-spacing:.7px;color:#fff;white-space:nowrap;text-shadow:0 0 2px rgba(0,0,0,.75),1px 1px 1.500px rgba(0,0,0,.55)"><span style="font-size:30.500px;letter-spacing:-1px;line-height:34px;font-weight:400;position:relative;top:-1.800px">@</span>敬业签</div>

</body>
</html>
